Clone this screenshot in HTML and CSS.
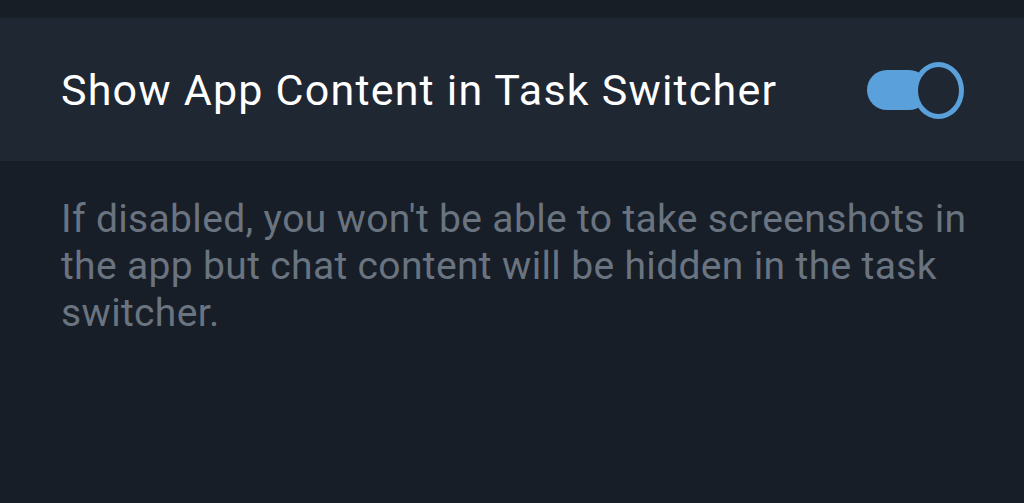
FILE: index.html
```html
<!DOCTYPE html>
<html>
<head>
<meta charset="utf-8">
<link rel="stylesheet" href="styles.css">
</head>
<body>
<div class="topbar"></div>
<div class="row">
  <div class="row-title">Show App Content in Task Switcher</div>
  <div class="toggle"><div class="track"></div><div class="knob"></div></div>
</div>
<p class="desc">If disabled, you won't be able to take screenshots in the app but chat content will be hidden in the task switcher.</p>
</body>
</html>
```
FILE: styles.css
```css
html, body {
  margin: 0;
  padding: 0;
  background: #171e27;
  width: 1024px;
  height: 503px;
  overflow: hidden;
  font-family: Roboto, "Noto Sans", sans-serif;
}
.topbar {
  height: 18px;
  background: #171e26;
}
.row {
  height: 143px;
  background: #1f2733;
  display: flex;
  align-items: flex-start;
  justify-content: space-between;
  padding: 0 60px 0 61px;
  box-sizing: border-box;
}
.row-title {
  color: #ffffff;
  font-size: 43px;
  line-height: 50px;
  letter-spacing: 1.2px;
  margin-top: 47px;
  white-space: nowrap;
}
.toggle {
  position: relative;
  width: 97px;
  height: 57px;
  margin-top: 44px;
  flex: none;
}
.track {
  position: absolute;
  left: 0;
  top: 8px;
  width: 62px;
  height: 40px;
  border-radius: 20px;
  background: #5aa0da;
}
.knob {
  position: absolute;
  right: 0;
  top: 0;
  width: 51px;
  height: 57px;
  box-sizing: border-box;
  border-radius: 50%;
  border: 5px solid #5aa0da;
  background: #1f2733;
}
.desc {
  margin: 0;
  padding: 35px 40px 0 61px;
  color: #6a7480;
  font-size: 39px;
  line-height: 47px;
  letter-spacing: 0.35px;
}
```
